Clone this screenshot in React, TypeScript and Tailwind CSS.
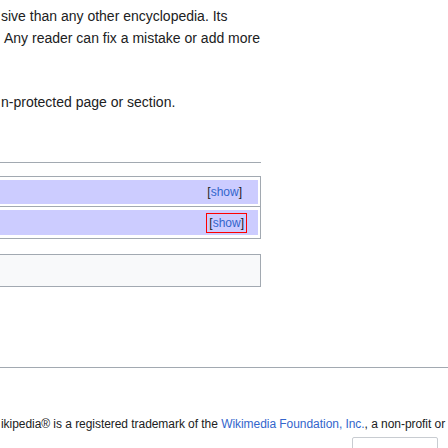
import React from 'react';

const ShowLink: React.FC<{ focused?: boolean }> = ({ focused = false }) => (
  <span
    className={`text-[12px] leading-[16px] px-[2px] py-[1px] ${
      focused ? 'border border-[#ff0000]' : 'border border-transparent'
    }`}
  >
    <span className="text-[#202122]">[</span>
    <span className="text-[#3366cc]">show</span>
    <span className="text-[#202122]">]</span>
  </span>
);

export default function App() {
  return (
    <div className="w-[448px] h-[448px] overflow-hidden bg-white text-[#202122] font-['Liberation_Sans',Arial,sans-serif]">
      {/* article text, scrolled off to the left */}
      <div className="pt-[5px] pl-[1px] text-[14px] leading-[22px]">
        <p>sive than any other encyclopedia. Its</p>
        <p className="pl-[3px]">Any reader can fix a mistake or add more</p>
        <p className="mt-[42px]">n-protected page or section.</p>
      </div>

      <div className="w-[261px] h-px bg-[#a2a9b1] mt-[49px]" />

      {/* navbox */}
      <div className="mt-[13px] w-[261px] border border-l-0 border-[#a2a9b1] py-[3px] pr-[2px]">
        <div className="h-[24px] bg-[#ccccff] flex items-center justify-end pr-[13px]">
          <ShowLink />
        </div>
        <div className="h-px bg-[#a2a9b1] mt-[2px] -mr-[2px]" />
        <div className="mt-[3px] h-[25px] bg-[#ccccff] flex items-center justify-end pr-[11px]">
          <ShowLink focused />
        </div>
      </div>

      <div className="mt-[15px] w-[261px] h-[33px] border border-l-0 border-[#a2a9b1] bg-[#f8f9fa]" />

      <div className="mt-[80px] w-full h-px bg-[#a2a9b1]" />

      {/* footer */}
      <div className="mt-[48px] pl-[1px] text-[12px] leading-[16px] tracking-[-0.05px] whitespace-nowrap">
        ikipedia® is a registered trademark of the{' '}
        <span className="text-[#3366cc]">Wikimedia Foundation, Inc.</span>, a non-profit or
      </div>
      <div className="mt-[5px] ml-[352px] w-[86px] h-[30px] rounded-[2px] border border-[#c8ccd1] bg-white" />
    </div>
  );
}
